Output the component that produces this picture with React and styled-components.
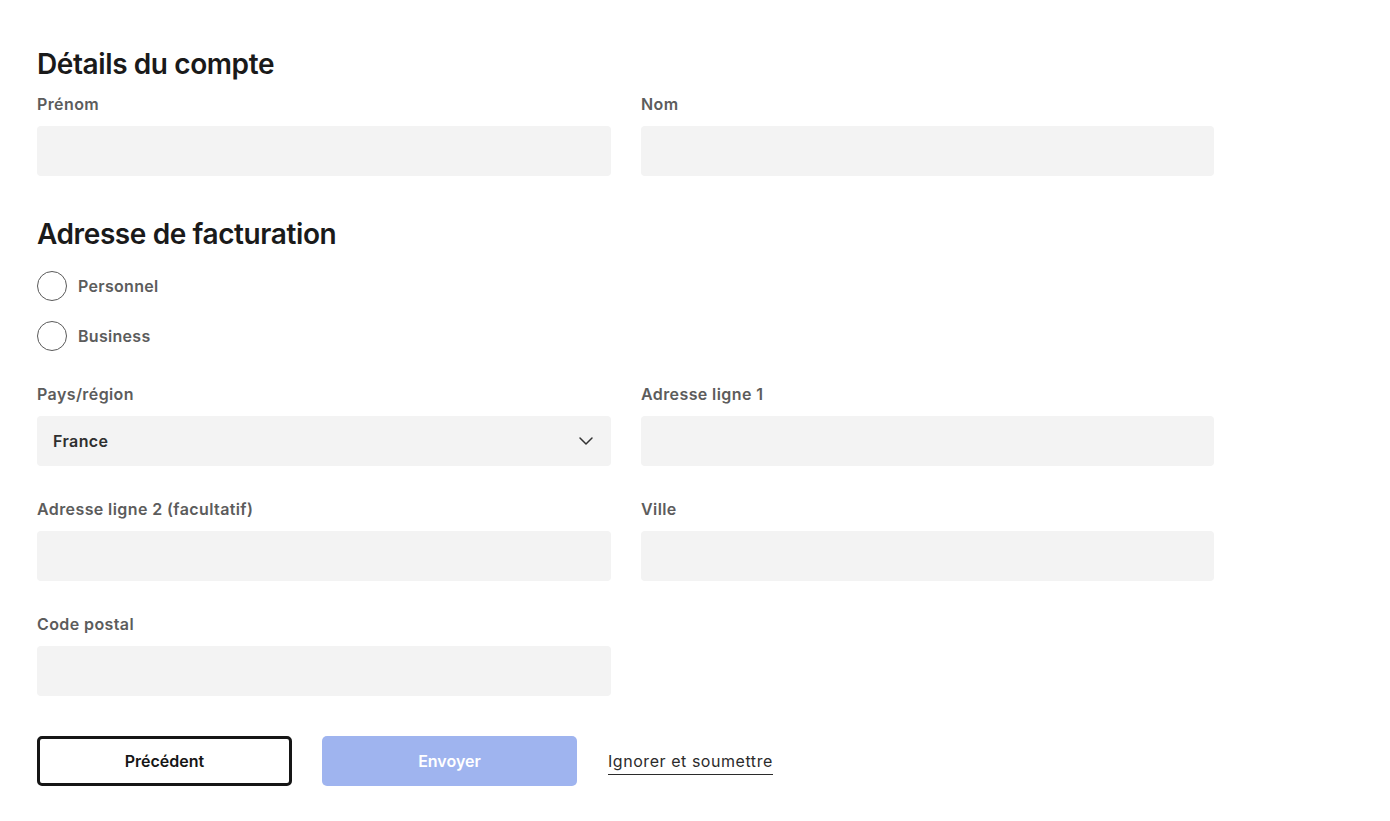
import React from "react";
import styled, { createGlobalStyle } from "styled-components";

const Global = createGlobalStyle`
  * { box-sizing: border-box; }
  body {
    margin: 0;
    background: #fff;
    font-family: Inter, "Noto Sans", "Liberation Sans", sans-serif;
    color: #1a1a1a;
  }
`;

const Page = styled.form`
  padding: 47px 0 40px 37px;
  width: 1214px;
  display: flex;
  flex-direction: column;
`;

const Heading = styled.h2`
  margin: 0;
  font-size: 28px;
  line-height: 34px;
  font-weight: 600;
  letter-spacing: -0.4px;
  color: #1a1a1a;
  margin-top: ${(p) => p.$top || 0}px;
`;

const Grid = styled.div`
  display: grid;
  grid-template-columns: 574px 573px;
  column-gap: 30px;
  row-gap: 33px;
  margin-top: ${(p) => p.$top || 0}px;
`;

const Field = styled.label`
  display: flex;
  flex-direction: column;
  gap: 12px;
`;

const Label = styled.span`
  font-size: 16px;
  line-height: 20px;
  font-weight: 600;
  letter-spacing: 0.4px;
  color: #5c5c5c;
`;

const Input = styled.input`
  height: 50px;
  border: none;
  border-radius: 4px;
  background: #f3f3f3;
  padding: 0 16px;
  font: inherit;
  font-size: 16px;
  outline: none;
`;

const SelectBox = styled.div`
  height: 50px;
  border-radius: 4px;
  background: #f3f3f3;
  display: flex;
  align-items: center;
  justify-content: space-between;
  padding: 0 16px;
  font-size: 16px;
  font-weight: 600;
  letter-spacing: 0.4px;
  color: #2f2f2f;
`;

const RadioGroup = styled.div`
  display: flex;
  flex-direction: column;
  gap: 20px;
  margin-top: 20px;
`;

const RadioRow = styled.label`
  display: flex;
  align-items: center;
  gap: 11px;
  font-size: 16px;
  font-weight: 600;
  letter-spacing: 0.3px;
  color: #5c5c5c;
  cursor: pointer;
`;

const Circle = styled.span`
  width: 30px;
  height: 30px;
  border-radius: 50%;
  border: 1.5px solid #5a5a5a;
  background: #fff;
`;

const Actions = styled.div`
  display: flex;
  align-items: center;
  gap: 30px;
  margin-top: 40px;
`;

const Button = styled.button`
  width: 255px;
  height: 50px;
  border-radius: 5px;
  font: inherit;
  font-size: 16px;
  font-weight: 600;
  cursor: pointer;
  border: ${(p) => (p.$primary ? "none" : "3px solid #161616")};
  background: ${(p) => (p.$primary ? "#9fb4ef" : "#fff")};
  color: ${(p) => (p.$primary ? "#fff" : "#161616")};
`;

const Link = styled.a`
  font-size: 16px;
  font-weight: 400;
  letter-spacing: 0.55px;
  line-height: 20px;
  color: #2b2b2b;
  text-decoration: none;
  border-bottom: 1.5px solid #2b2b2b;
  padding-bottom: 3px;
  margin-top: 4px;
  margin-left: 1px;
`;

const Chevron = () => (
  <svg width="18" height="18" viewBox="0 0 24 24" fill="none" stroke="#333" strokeWidth="2" strokeLinecap="round" strokeLinejoin="round">
    <path d="M4 8l8 8 8-8" />
  </svg>
);

const TextField = ({ label }) => (
  <Field>
    <Label>{label}</Label>
    <Input type="text" />
  </Field>
);

export default function App() {
  return (
    <>
      <Global />
      <Page onSubmit={(e) => e.preventDefault()}>
        <Heading>Détails du compte</Heading>
        <Grid $top={13}>
          <TextField label="Prénom" />
          <TextField label="Nom" />
        </Grid>

        <Heading $top={41}>Adresse de facturation</Heading>
        <RadioGroup>
          <RadioRow>
            <Circle />
            Personnel
          </RadioRow>
          <RadioRow>
            <Circle />
            Business
          </RadioRow>
        </RadioGroup>

        <Grid $top={33}>
          <Field>
            <Label>Pays/région</Label>
            <SelectBox>
              France
              <Chevron />
            </SelectBox>
          </Field>
          <TextField label="Adresse ligne 1" />
          <TextField label="Adresse ligne 2 (facultatif)" />
          <TextField label="Ville" />
          <TextField label="Code postal" />
        </Grid>

        <Actions>
          <Button type="button">Précédent</Button>
          <Button type="button" $primary>Envoyer</Button>
          <Link href="#">Ignorer et soumettre</Link>
        </Actions>
      </Page>
    </>
  );
}
